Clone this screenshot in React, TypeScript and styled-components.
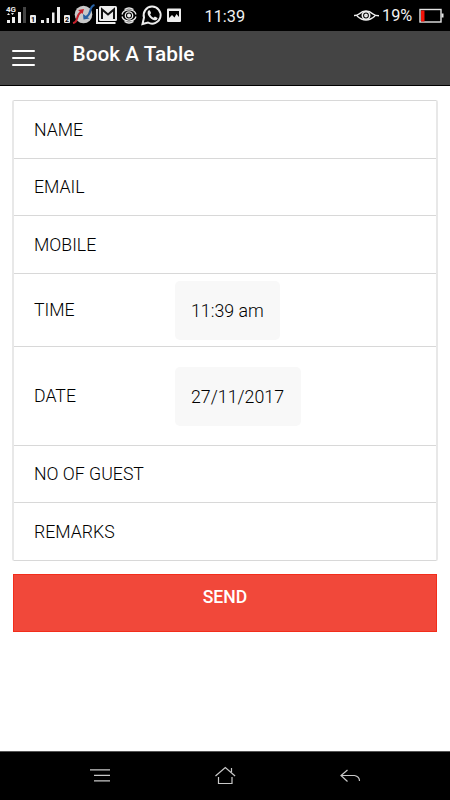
import React from "react";
import styled, { createGlobalStyle } from "styled-components";

const GlobalStyle = createGlobalStyle`
  * { box-sizing: border-box; }
  html, body { margin: 0; padding: 0; background: #fff; }
  body { font-family: Roboto, sans-serif; color: #000; overflow: hidden; }
  svg { display: block; flex: none; }
`;

const Screen = styled.div`
  width: 450px;
  height: 800px;
  display: flex;
  flex-direction: column;
  background: #fff;
`;

const StatusBar = styled.header`
  height: 31px;
  flex: none;
  display: flex;
  align-items: center;
  background: #000;
  color: #f2f2f2;
`;

const StatusIcons = styled.div`
  width: 204.5px;
  height: 31px;
`;

const Clock = styled.time`
  width: 149.5px;
  font-size: 16.3px;
  line-height: 20px;
  padding-top: 2px;
`;

const Battery = styled.div`
  display: flex;
  align-items: center;
  height: 31px;
`;

const Percent = styled.span`
  width: 37px;
  font-size: 16.3px;
  line-height: 20px;
  padding-top: 1px;
  margin-left: 3px;
`;

const AppBar = styled.div`
  height: 55px;
  flex: none;
  display: flex;
  align-items: flex-start;
  background: #444;
  border-bottom: 1px solid #000;
  padding-left: 12px;
`;

const MenuButton = styled.button`
  width: 23px;
  height: 16px;
  margin: 19px 37.5px 0 0;
  padding: 0;
  border: 0;
  background: none;
  display: flex;
  flex-direction: column;
  justify-content: space-between;
`;

const MenuLine = styled.span`
  width: 23px;
  height: 2px;
  border-radius: 1px;
  background: #fff;
`;

const Title = styled.h1`
  margin: 10px 0 0;
  font-size: 20.8px;
  line-height: 26px;
  font-weight: 500;
  color: #fff;
`;

const Content = styled.main`
  flex: 1;
  padding: 14px 12px 0;
`;

const Card = styled.div`
  border: 1px solid #d8d8d8;
  border-left: 2px solid #e8e8e8;
  border-right: 2px solid #e8e8e8;
  border-radius: 2px;
`;

const Row = styled.div<{ $height: number }>`
  height: ${(p) => p.$height}px;
  display: flex;
  align-items: center;
  padding-left: 20px;
  font-size: 17.7px;
  font-weight: 300;
  & + & { border-top: 1px solid #d8d8d8; }
`;

const Label = styled.span`
  width: 141px;
  white-space: nowrap;
`;

const Value = styled.span<{ $width: number }>`
  width: ${(p) => p.$width}px;
  height: 59px;
  padding-left: 16px;
  display: flex;
  align-items: center;
  border-radius: 5px;
  background: #f8f8f8;
  white-space: nowrap;
  font-size: 17.8px;
`;

const SendButton = styled.button`
  display: block;
  width: calc(100% - 2px);
  height: 58px;
  margin: 13px 1px 0;
  padding: 0 0 12px;
  border: 1px solid #f32d1b;
  background: #f1483a;
  color: #fff;
  font: 500 17.6px/20px Roboto, sans-serif;
`;

const NavBar = styled.nav`
  height: 49px;
  flex: none;
  background: #000;
  border-top: 1px solid #555;
`;

const fields = [
  { label: "NAME", height: 57 },
  { label: "EMAIL", height: 57 },
  { label: "MOBILE", height: 58 },
  { label: "TIME", height: 73, value: "11:39 am", width: 105 },
  { label: "DATE", height: 99, value: "27/11/2017", width: 126 },
  { label: "NO OF GUEST", height: 57 },
  { label: "REMARKS", height: 58 },
];

const Notifications = () => (
  <svg width="204" height="31" viewBox="0 0 204 31" fill="#ededed">
    <text x="6" y="12" fontFamily="Roboto" fontSize="8" fontWeight="700">4G</text>
    <path d="M7 15h3l-1.500-2zM11 13h3l-1.500 2z" />
    <path d="M7 20h3v3H7zM12 17h3v6h-3zM18 12h3v11h-3z" />
    <path fill="#444" d="M23 7h3v16h-3z" />
    <rect x="30" y="15" width="6" height="8" rx="1" />
    <text x="31" y="22" fill="#000" fontFamily="Roboto" fontSize="7" fontWeight="700">1</text>
    <path d="M41 20h3v3h-3zM46.500 18h2.500v5h-2.500zM52 12.500h2.500V23H52zM57 7h3v16h-3z" />
    <rect x="64" y="15" width="6" height="8" rx="1" />
    <text x="65" y="22" fill="#000" fontFamily="Roboto" fontSize="7" fontWeight="700">2</text>
    <circle cx="83.500" cy="14.500" r="8.800" fill="#c9c9c9" />
    <path d="M73 23C79 22 75 16 81 12" fill="none" stroke="#c7202b" strokeWidth="2" />
    <path d="M78 10l6-1-1.500 5z" fill="#c7202b" />
    <path d="M94.500 5C88 7 93 13 86 17" fill="none" stroke="#2861a3" strokeWidth="2" />
    <path d="M83 14l.5 5.500 6-1z" fill="#2861a3" />
    <path d="M97 9v14h18.500" fill="none" stroke="#ededed" strokeWidth="2" />
    <rect x="99" y="6" width="18" height="15" rx="1.500" />
    <path d="M102 19V9.500l6 5 6-5V19" fill="none" stroke="#111" strokeWidth="2" />
    <g fill="none" stroke="#ededed" strokeWidth="1.300">
      <circle cx="129" cy="15.500" r="3.700" />
      <path d="M122 14.500A7.200 6 0 0 1 136 14.500M122 16.500A7.200 6 0 0 0 136 16.500M124.500 9.500Q129 6.500 133.500 9.500M124.500 21.500Q129 24.500 133.500 21.500" />
    </g>
    <circle cx="129" cy="15.500" r="2" />
    <path d="M144 17.500A8.500 8.500 0 1 1 148 22.500L142.500 24z" fill="none" stroke="#ededed" strokeWidth="2" />
    <path d="M147.800 11.500c1-1.700 2.100-1.300 2.600 0l.7 1.600-1 1.500c.9 1.700 1.900 2.500 3.500 3.200l1.300-1.300 2.700 1.400c0 1.600-1.800 2.600-3.400 2.300-3.600-.8-7.500-5.300-6.400-8.700z" />
    <path fillRule="evenodd" d="M168 8.500h12.500q.5 0 .5 1v11.500q0 1-1 1h-12q-1 0-1-1V9.500q0-1 1-1zM169 11v7l3-3 2.500 2.500 2-3.500 2.500 3v-6z" />
  </svg>
);

const EyeIcon = () => (
  <svg width="25" height="31" viewBox="0 0 25 31" fill="none" stroke="#eee" strokeWidth="1.600">
    <path d="M0 15.500q3 .2 5-1.500 7-6 14 0 2 1.700 6 1.800M3 16q9 8 18 0" />
    <circle cx="12" cy="15.500" r="3.700" />
    <circle cx="12" cy="15.500" r="1.100" />
  </svg>
);

const BatteryIcon = () => (
  <svg width="26" height="31" viewBox="0 0 26 31">
    <rect x="1" y="9.500" width="21" height="12.500" fill="none" stroke="#e4e4e4" strokeWidth="1.400" />
    <path d="M22.500 13.500h2v4h-2z" fill="#e4e4e4" />
    <path d="M2 10.500h3.500v11H2z" fill="#f31208" />
  </svg>
);

const NavigationIcons = () => (
  <svg width="450" height="48" viewBox="0 752 450 48" fill="none" stroke="#c8c8c8" strokeWidth="1.200">
    <path d="M90 769.800h20M94 775.300h16M94 780.800h16" />
    <path d="M215.500 776l9.800-8.500 9.800 8.500M218.500 777v6.500h13.500V777M231.500 768v4" />
    <path d="M347.500 770l-6.500 5.500 6.500 6M341 775.500h13.500q5 1 5 5.500" />
  </svg>
);

export default function App() {
  return (
    <>
      <GlobalStyle />
      <Screen>
        <StatusBar>
          <StatusIcons><Notifications /></StatusIcons>
          <Clock>11:39</Clock>
          <Battery>
            <EyeIcon />
            <Percent>19%</Percent>
            <BatteryIcon />
          </Battery>
        </StatusBar>
        <AppBar>
          <MenuButton aria-label="Menu">
            <MenuLine /><MenuLine /><MenuLine />
          </MenuButton>
          <Title>Book A Table</Title>
        </AppBar>
        <Content>
          <Card>
            {fields.map((field) => (
              <Row key={field.label} $height={field.height}>
                <Label>{field.label}</Label>
                {field.value && <Value $width={field.width!}>{field.value}</Value>}
              </Row>
            ))}
          </Card>
          <SendButton>SEND</SendButton>
        </Content>
        <NavBar><NavigationIcons /></NavBar>
      </Screen>
    </>
  );
}
